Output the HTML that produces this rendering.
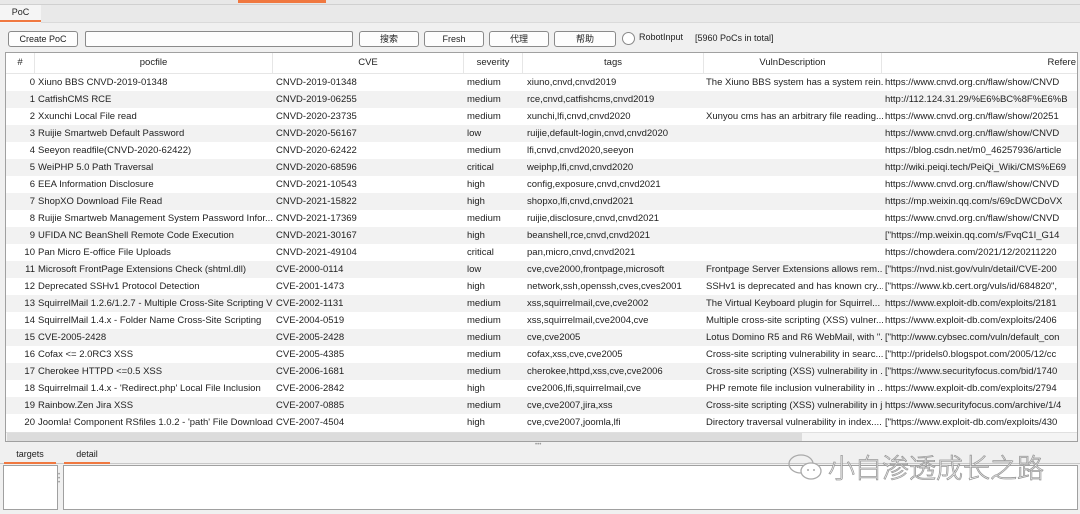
<!DOCTYPE html>
<html><head><meta charset="utf-8"><style>
*{box-sizing:border-box;margin:0;padding:0}
body{width:1080px;height:514px;background:#f0f0f0;font-family:"Liberation Sans","Noto Sans CJK SC",sans-serif;font-size:9.5px;color:#222;position:relative;overflow:hidden}
.a{position:absolute}
.btn{position:absolute;top:31px;height:16px;border:1px solid #8a8a8a;border-radius:3px;background:#fdfdfd;text-align:center;line-height:14px;font-size:9px}
.tbl{position:absolute;left:5px;top:52px;width:1073px;height:390px;background:#fff;border:1px solid #a0a0a0;overflow:hidden}
.row{position:absolute;left:0;width:1072px;height:17px;line-height:17px;white-space:nowrap}
.row:nth-child(even){background:#f2f2f2}
.row span{position:absolute;overflow:hidden;white-space:nowrap}
.c0{left:0;width:29px;text-align:right}
.c1{left:32px;width:238px}
.c2{left:270px;width:191px}
.c3{left:461px;width:59px}
.c4{left:521px;width:181px}
.c5{left:700px;width:177px}
.c6{left:879px;width:192px}
.hdr{position:absolute;left:0;top:0;width:1072px;height:21px;background:#fff;border-bottom:1px solid #e6e6e6;line-height:20px}
.hdr span{position:absolute;text-align:center;border-right:1px solid #e6e6e6;height:21px}
</style></head><body>
<div class="a" style="left:0;top:0;width:1080px;height:5px;background:#e8e8e8;border-bottom:1px solid #d0d0d0"></div>
<div class="a" style="left:238px;top:0;width:88px;height:3px;background:#f07840"></div>
<div class="a" style="left:0;top:5px;width:1080px;height:18px;background:#e9e9e9;border-bottom:1px solid #dadada"></div>
<div class="a" style="left:0;top:5px;width:41px;height:18px;background:#f5f5f5;text-align:center;line-height:15px;font-size:9px">PoC</div>
<div class="a" style="left:0;top:20px;width:41px;height:2px;background:#f07840"></div>

<div class="btn" style="left:8px;width:70px">Create PoC</div>
<div class="btn" style="left:85px;width:268px;border-radius:2px"></div>
<div class="btn" style="left:359px;width:60px">搜索</div>
<div class="btn" style="left:424px;width:60px">Fresh</div>
<div class="btn" style="left:489px;width:60px">代理</div>
<div class="btn" style="left:554px;width:62px">帮助</div>
<div class="a" style="left:622px;top:32px;width:13px;height:13px;border:1px solid #888;border-radius:50%;background:#fff"></div>
<div class="a" style="left:639px;top:32px;font-size:9px">RobotInput</div>
<div class="a" style="left:695px;top:33px;font-size:9px">[5960 PoCs in total]</div>

<div class="tbl">
<div class="hdr"><span style="left:0;width:29px">#</span><span style="left:29px;width:238px">pocfile</span><span style="left:267px;width:191px">CVE</span><span style="left:458px;width:59px">severity</span><span style="left:517px;width:181px">tags</span><span style="left:698px;width:178px">VulnDescription</span><span style="left:876px;width:196px;text-align:right;padding-right:2px;border:none">Refere</span></div>
<div style="position:absolute;left:0;top:21px;width:1072px">
<div class="row" style="top:0"><span class="c0">0</span><span class="c1">Xiuno BBS CNVD-2019-01348</span><span class="c2">CNVD-2019-01348</span><span class="c3">medium</span><span class="c4">xiuno,cnvd,cnvd2019</span><span class="c5">The Xiuno BBS system has a system rein...</span><span class="c6">https://www.cnvd.org.cn/flaw/show/CNVD</span></div>
<div class="row" style="top:17px"><span class="c0">1</span><span class="c1">CatfishCMS RCE</span><span class="c2">CNVD-2019-06255</span><span class="c3">medium</span><span class="c4">rce,cnvd,catfishcms,cnvd2019</span><span class="c5"></span><span class="c6">http://112.124.31.29/%E6%BC%8F%E6%B</span></div>
<div class="row" style="top:34px"><span class="c0">2</span><span class="c1">Xxunchi Local File read</span><span class="c2">CNVD-2020-23735</span><span class="c3">medium</span><span class="c4">xunchi,lfi,cnvd,cnvd2020</span><span class="c5">Xunyou cms has an arbitrary file reading...</span><span class="c6">https://www.cnvd.org.cn/flaw/show/20251</span></div>
<div class="row" style="top:51px"><span class="c0">3</span><span class="c1">Ruijie Smartweb Default Password</span><span class="c2">CNVD-2020-56167</span><span class="c3">low</span><span class="c4">ruijie,default-login,cnvd,cnvd2020</span><span class="c5"></span><span class="c6">https://www.cnvd.org.cn/flaw/show/CNVD</span></div>
<div class="row" style="top:68px"><span class="c0">4</span><span class="c1">Seeyon readfile(CNVD-2020-62422)</span><span class="c2">CNVD-2020-62422</span><span class="c3">medium</span><span class="c4">lfi,cnvd,cnvd2020,seeyon</span><span class="c5"></span><span class="c6">https://blog.csdn.net/m0_46257936/article</span></div>
<div class="row" style="top:85px"><span class="c0">5</span><span class="c1">WeiPHP 5.0 Path Traversal</span><span class="c2">CNVD-2020-68596</span><span class="c3">critical</span><span class="c4">weiphp,lfi,cnvd,cnvd2020</span><span class="c5"></span><span class="c6">http://wiki.peiqi.tech/PeiQi_Wiki/CMS%E69</span></div>
<div class="row" style="top:102px"><span class="c0">6</span><span class="c1">EEA Information Disclosure</span><span class="c2">CNVD-2021-10543</span><span class="c3">high</span><span class="c4">config,exposure,cnvd,cnvd2021</span><span class="c5"></span><span class="c6">https://www.cnvd.org.cn/flaw/show/CNVD</span></div>
<div class="row" style="top:119px"><span class="c0">7</span><span class="c1">ShopXO Download File Read</span><span class="c2">CNVD-2021-15822</span><span class="c3">high</span><span class="c4">shopxo,lfi,cnvd,cnvd2021</span><span class="c5"></span><span class="c6">https://mp.weixin.qq.com/s/69cDWCDoVX</span></div>
<div class="row" style="top:136px"><span class="c0">8</span><span class="c1">Ruijie Smartweb Management System Password Infor...</span><span class="c2">CNVD-2021-17369</span><span class="c3">medium</span><span class="c4">ruijie,disclosure,cnvd,cnvd2021</span><span class="c5"></span><span class="c6">https://www.cnvd.org.cn/flaw/show/CNVD</span></div>
<div class="row" style="top:153px"><span class="c0">9</span><span class="c1">UFIDA NC BeanShell Remote Code Execution</span><span class="c2">CNVD-2021-30167</span><span class="c3">high</span><span class="c4">beanshell,rce,cnvd,cnvd2021</span><span class="c5"></span><span class="c6">["https://mp.weixin.qq.com/s/FvqC1I_G14</span></div>
<div class="row" style="top:170px"><span class="c0">10</span><span class="c1">Pan Micro E-office File Uploads</span><span class="c2">CNVD-2021-49104</span><span class="c3">critical</span><span class="c4">pan,micro,cnvd,cnvd2021</span><span class="c5"></span><span class="c6">https://chowdera.com/2021/12/20211220</span></div>
<div class="row" style="top:187px"><span class="c0">11</span><span class="c1">Microsoft FrontPage Extensions Check (shtml.dll)</span><span class="c2">CVE-2000-0114</span><span class="c3">low</span><span class="c4">cve,cve2000,frontpage,microsoft</span><span class="c5">Frontpage Server Extensions allows rem...</span><span class="c6">["https://nvd.nist.gov/vuln/detail/CVE-200</span></div>
<div class="row" style="top:204px"><span class="c0">12</span><span class="c1">Deprecated SSHv1 Protocol Detection</span><span class="c2">CVE-2001-1473</span><span class="c3">high</span><span class="c4">network,ssh,openssh,cves,cves2001</span><span class="c5">SSHv1 is deprecated and has known cry...</span><span class="c6">["https://www.kb.cert.org/vuls/id/684820",</span></div>
<div class="row" style="top:221px"><span class="c0">13</span><span class="c1">SquirrelMail 1.2.6/1.2.7 - Multiple Cross-Site Scripting V</span><span class="c2">CVE-2002-1131</span><span class="c3">medium</span><span class="c4">xss,squirrelmail,cve,cve2002</span><span class="c5">The Virtual Keyboard plugin for Squirrel...</span><span class="c6">https://www.exploit-db.com/exploits/2181</span></div>
<div class="row" style="top:238px"><span class="c0">14</span><span class="c1">SquirrelMail 1.4.x - Folder Name Cross-Site Scripting</span><span class="c2">CVE-2004-0519</span><span class="c3">medium</span><span class="c4">xss,squirrelmail,cve2004,cve</span><span class="c5">Multiple cross-site scripting (XSS) vulner...</span><span class="c6">https://www.exploit-db.com/exploits/2406</span></div>
<div class="row" style="top:255px"><span class="c0">15</span><span class="c1">CVE-2005-2428</span><span class="c2">CVE-2005-2428</span><span class="c3">medium</span><span class="c4">cve,cve2005</span><span class="c5">Lotus Domino R5 and R6 WebMail, with ".</span><span class="c6">["http://www.cybsec.com/vuln/default_con</span></div>
<div class="row" style="top:272px"><span class="c0">16</span><span class="c1">Cofax &lt;= 2.0RC3 XSS</span><span class="c2">CVE-2005-4385</span><span class="c3">medium</span><span class="c4">cofax,xss,cve,cve2005</span><span class="c5">Cross-site scripting vulnerability in searc...</span><span class="c6">["http://pridels0.blogspot.com/2005/12/cc</span></div>
<div class="row" style="top:289px"><span class="c0">17</span><span class="c1">Cherokee HTTPD &lt;=0.5 XSS</span><span class="c2">CVE-2006-1681</span><span class="c3">medium</span><span class="c4">cherokee,httpd,xss,cve,cve2006</span><span class="c5">Cross-site scripting (XSS) vulnerability in ...</span><span class="c6">["https://www.securityfocus.com/bid/1740</span></div>
<div class="row" style="top:306px"><span class="c0">18</span><span class="c1">Squirrelmail 1.4.x - 'Redirect.php' Local File Inclusion</span><span class="c2">CVE-2006-2842</span><span class="c3">high</span><span class="c4">cve2006,lfi,squirrelmail,cve</span><span class="c5">PHP remote file inclusion vulnerability in ...</span><span class="c6">https://www.exploit-db.com/exploits/2794</span></div>
<div class="row" style="top:323px"><span class="c0">19</span><span class="c1">Rainbow.Zen Jira XSS</span><span class="c2">CVE-2007-0885</span><span class="c3">medium</span><span class="c4">cve,cve2007,jira,xss</span><span class="c5">Cross-site scripting (XSS) vulnerability in j.</span><span class="c6">https://www.securityfocus.com/archive/1/4</span></div>
<div class="row" style="top:340px"><span class="c0">20</span><span class="c1">Joomla! Component RSfiles 1.0.2 - 'path' File Download</span><span class="c2">CVE-2007-4504</span><span class="c3">high</span><span class="c4">cve,cve2007,joomla,lfi</span><span class="c5">Directory traversal vulnerability in index....</span><span class="c6">["https://www.exploit-db.com/exploits/430</span></div>
</div>
<div class="a" style="left:0;top:379px;width:1072px;height:10px;background:#f4f4f4;border-top:1px solid #e0e0e0"></div>
<div class="a" style="left:1px;top:380px;width:795px;height:8px;background:#dcdcdc"></div>
</div>
<div class="a" style="left:535px;top:442px;font-size:6px;color:#999">•••</div>
<div class="a" style="left:0;top:448px;width:1080px;height:16px;background:#f0f0f0;border-bottom:1px solid #c8c8c8"></div>
<div class="a" style="left:4px;top:449px;width:52px;text-align:center;font-size:9px">targets</div>
<div class="a" style="left:4px;top:462px;width:52px;height:2px;background:#f07840"></div>
<div class="a" style="left:64px;top:449px;width:46px;text-align:center;font-size:9px">detail</div>
<div class="a" style="left:64px;top:462px;width:46px;height:2px;background:#f07840"></div>
<div class="a" style="left:3px;top:465px;width:55px;height:45px;background:#fff;border:1px solid #a0a0a0"></div>
<div class="a" style="left:58px;top:473px;font-size:6px;color:#999;line-height:4px">•<br>•<br>•</div>
<div class="a" style="left:63px;top:465px;width:1015px;height:45px;background:#fff;border:1px solid #a0a0a0"></div>
<svg class="a" style="left:786px;top:452px" width="42" height="32" viewBox="0 0 42 32"><ellipse cx="15" cy="12" rx="12" ry="9" fill="none" stroke="#aaa" stroke-width="1.3"/><ellipse cx="25" cy="19" rx="10" ry="8" fill="#fff" stroke="#aaa" stroke-width="1.3"/><circle cx="22" cy="18" r="1" fill="#aaa"/><circle cx="28" cy="18" r="1" fill="#aaa"/></svg>
<div class="a" style="left:828px;top:450px;font-size:27px;color:#fff;-webkit-text-stroke:0.8px #999;font-family:'Noto Sans CJK SC',sans-serif;font-weight:300;line-height:34px">小白渗透成长之路</div>
</body></html>
